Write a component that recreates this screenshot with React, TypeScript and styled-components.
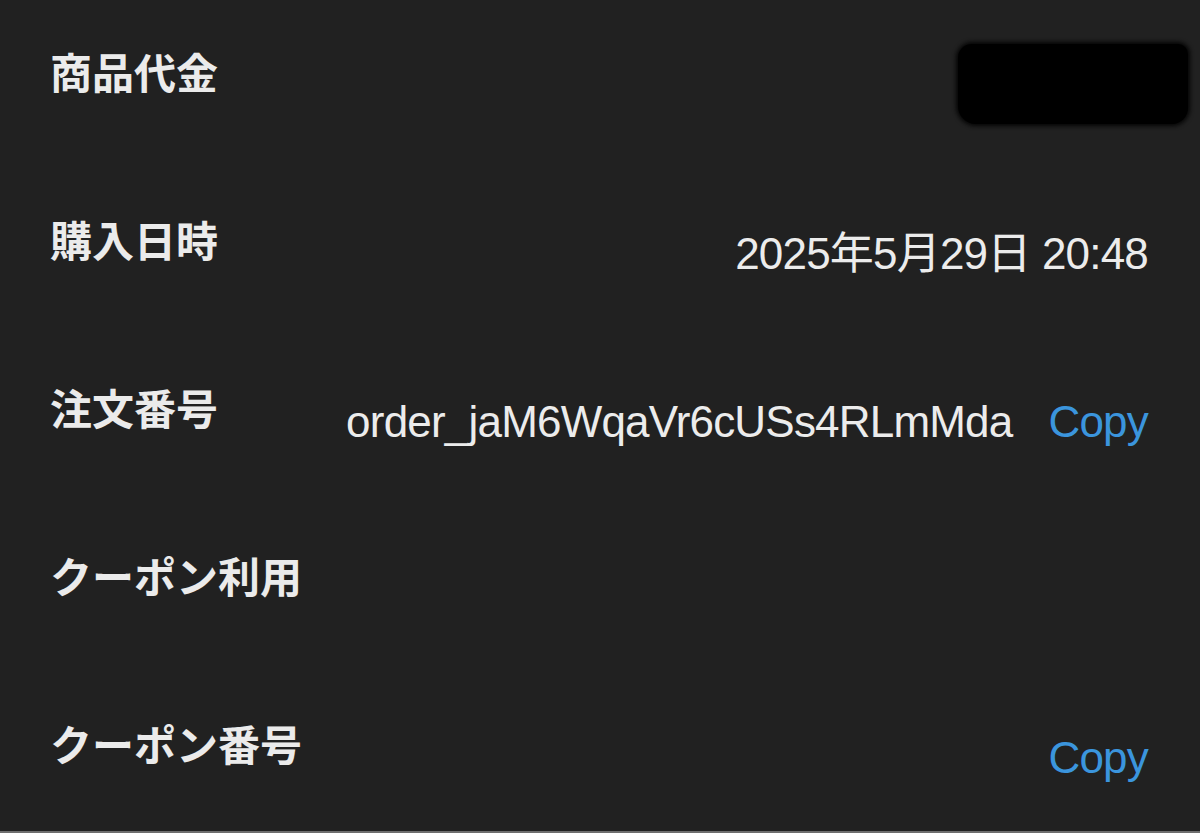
import React from 'react'
import styled, { createGlobalStyle } from 'styled-components'

const GlobalStyle = createGlobalStyle`
  html, body {
    margin: 0;
    padding: 0;
    background: #212121;
  }
  body {
    font-family: "Liberation Sans", "Noto Sans CJK JP", sans-serif;
  }
`

const Page = styled.div`
  width: 1200px;
  height: 833px;
  box-sizing: border-box;
  background: #212121;
  padding: 0 52px 0 50px;
  overflow: hidden;
  border-bottom: 2px solid #6e6e6e;
`

const Row = styled.div`
  display: flex;
  align-items: center;
  justify-content: space-between;
  height: 168px;
  padding-bottom: 18px;
  box-sizing: border-box;
`

const Label = styled.div`
  font-family: "Noto Sans CJK JP", sans-serif;
  font-weight: 700;
  font-size: 42px;
  line-height: 1.2;
  color: #ebebeb;
  white-space: nowrap;
  margin-bottom: 8px;
`

const Value = styled.div`
  display: flex;
  align-items: center;
  gap: 36px;
  margin-top: 22px;
  font-family: "Liberation Sans", "Noto Sans CJK JP", sans-serif;
  font-size: 44px;
  line-height: 1.2;
  letter-spacing: -0.8px;
  color: #ececec;
  white-space: nowrap;
`

const CopyButton = styled.button`
  border: none;
  background: none;
  padding: 0;
  font: inherit;
  letter-spacing: inherit;
  color: #3b95dd;
  cursor: pointer;
`

const Redacted = styled.div`
  width: 230px;
  height: 80px;
  margin-right: -40px;
  margin-top: 18px;
  background: #000;
  border-radius: 14px 10px 16px 18px;
  box-shadow: 0 0 4px 2px #050505;
`

interface DetailRowProps {
  label: string
  value?: React.ReactNode
  copy?: boolean
}

function DetailRow({ label, value, copy }: DetailRowProps) {
  return (
    <Row>
      <Label>{label}</Label>
      {(value || copy) && (
        <Value>
          {value}
          {copy && <CopyButton>Copy</CopyButton>}
        </Value>
      )}
    </Row>
  )
}

export default function App() {
  return (
    <>
      <GlobalStyle />
      <Page>
        <Row>
          <Label>商品代金</Label>
          <Redacted />
        </Row>
        <DetailRow label="購入日時" value="2025年5月29日 20:48" />
        <DetailRow label="注文番号" value="order_jaM6WqaVr6cUSs4RLmMda" copy />
        <DetailRow label="クーポン利用" />
        <DetailRow label="クーポン番号" copy />
      </Page>
    </>
  )
}
